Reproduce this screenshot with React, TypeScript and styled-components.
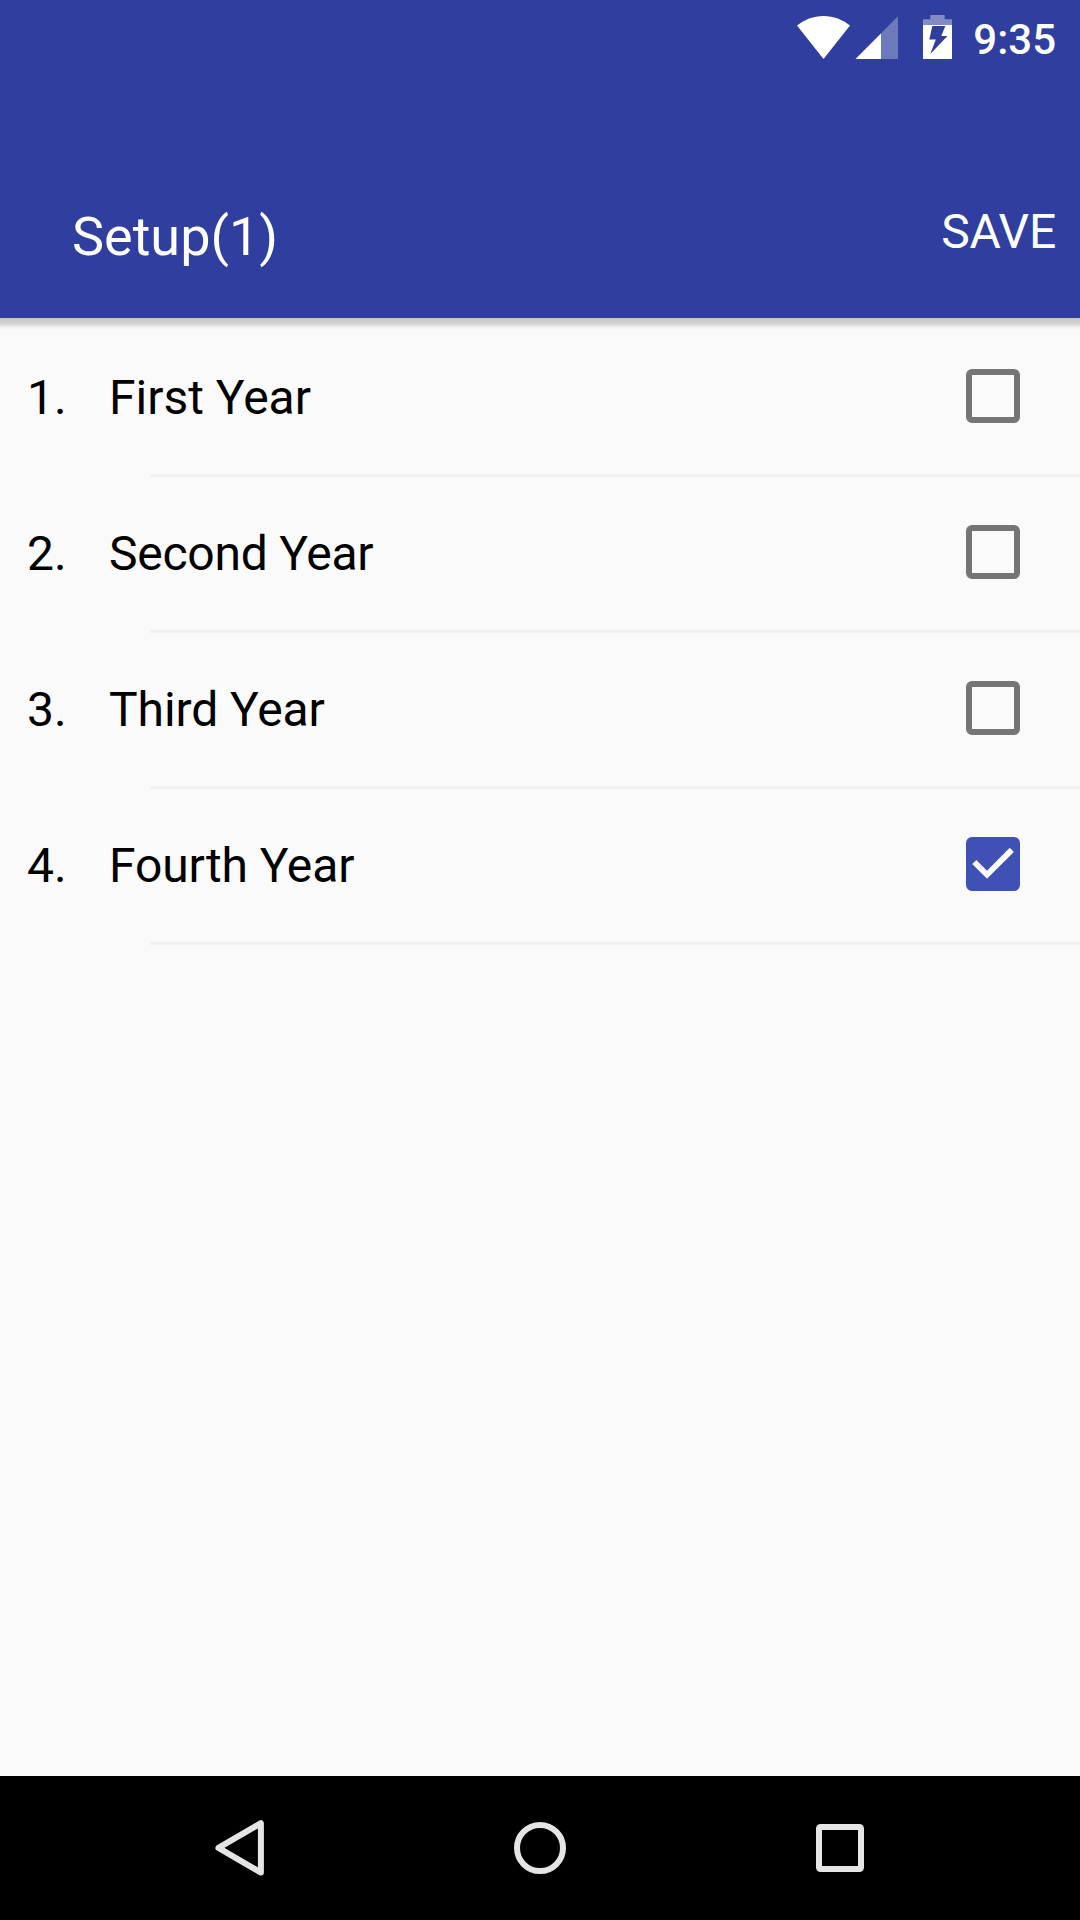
import React, { useState } from "react";
import styled, { createGlobalStyle } from "styled-components";

const GlobalStyle = createGlobalStyle`
  *, *::before, *::after { box-sizing: border-box; }
  body { margin: 0; background: #fafafa; }
`;

const Screen = styled.div`
  display: flex;
  flex-direction: column;
  width: 1080px;
  height: 1920px;
  overflow: hidden;
  background: #fafafa;
  color: #000;
  font-family: Roboto, sans-serif;
  font-size: 48px;
  line-height: 56px;
`;

const Header = styled.header`
  display: flex;
  flex-direction: column;
  flex: none;
  height: 318px;
  background: #303f9f;
  color: #fff;
`;

const StatusBar = styled.div`
  display: flex;
  align-items: flex-start;
  justify-content: flex-end;
  height: 72px;
  padding-right: 24px;
`;

const StatusIcons = styled.svg`
  display: block;
  width: 160px;
  height: 72px;
  margin-right: 18px;
`;

const Clock = styled.time`
  padding-top: 15px;
  font-size: 42px;
  font-weight: 500;
  line-height: 50px;
`;

const Toolbar = styled.div`
  display: flex;
  align-items: flex-start;
  justify-content: space-between;
  height: 246px;
  padding: 132px 24px 0 72px;
`;

const Title = styled.h1`
  margin: 1px 0 0;
  font-size: 54px;
  font-weight: 400;
  line-height: 64px;
`;

const SaveButton = styled.button`
  margin: 0;
  padding: 0;
  border: 0;
  background: none;
  color: inherit;
  font: inherit;
  letter-spacing: -0.2px;
`;

const Content = styled.main`
  flex: 1;
`;

const HeaderShadow = styled.div`
  height: 12px;
  margin-bottom: -9px;
  background: linear-gradient(#c4c4c4, #d4d4d4 45%, #f4f4f4 85%, #fafafa);
`;

const List = styled.ol`
  margin: 0;
  padding: 0;
  list-style: none;
`;

const Item = styled.li`
  display: flex;
  flex-direction: column;
  height: 156px;
`;

const Row = styled.label`
  display: flex;
  align-items: center;
  height: 153px;
  padding: 0 60px 0 27px;
`;

const Index = styled.span`
  width: 82px;
`;

const Label = styled.span<{ $tracking: number }>`
  flex: 1;
  letter-spacing: ${(p) => p.$tracking}px;
`;

const Divider = styled.div`
  height: 3px;
  margin-left: 150px;
  background: #f2f2f2;
`;

const Checkbox = styled.button<{ $checked: boolean }>`
  display: block;
  width: 54px;
  height: 54px;
  margin: 0 0 3px;
  padding: 0;
  border: ${(p) => (p.$checked ? "0" : "6px solid #757575")};
  border-radius: 6px;
  background: ${(p) => (p.$checked ? "#3f51b5" : "transparent")};
`;

const CheckMark = styled.svg`
  display: block;
  width: 54px;
  height: 54px;
`;

const NavBar = styled.nav`
  display: flex;
  align-items: center;
  justify-content: center;
  gap: 156px;
  flex: none;
  height: 144px;
  background: #000;
`;

const NavButton = styled.button`
  width: 144px;
  height: 144px;
  margin: 0;
  padding: 0;
  border: 0;
  background: none;
`;

const NavIcon = styled.svg`
  display: block;
  width: 144px;
  height: 144px;
  fill: none;
  stroke: #e5e5e5;
  stroke-width: 6;
  stroke-linejoin: round;
`;

const years = [
  { name: "First Year", tracking: 0 },
  { name: "Second Year", tracking: -0.25 },
  { name: "Third Year", tracking: -0.1 },
  { name: "Fourth Year", tracking: -0.1 },
];

export default function App() {
  const [selected, setSelected] = useState(3);

  return (
    <Screen>
      <GlobalStyle />
      <Header>
        <StatusBar>
          <StatusIcons viewBox="795 0 160 72" fill="#fff">
            <path d="M823.5 59 797 25.6C804.5 19.5 813.5 16 823.5 16S842.5 19.5 850 25.6Z" />
            <path d="M855.5 59 898 16.3V59Z" opacity="0.3" />
            <path d="M855.5 59 881 33.4V59Z" />
            <path d="M930.3 15H944.7V19.3H952V25H923V19.3H930.3Z" opacity="0.4" />
            <path
              fillRule="evenodd"
              d="M923 25H952V59H923ZM932.3 26 929.3 39.5H935.8L930.3 54 947.5 36H941.3L945.3 26Z"
            />
          </StatusIcons>
          <Clock>9:35</Clock>
        </StatusBar>
        <Toolbar>
          <Title>Setup(1)</Title>
          <SaveButton>SAVE</SaveButton>
        </Toolbar>
      </Header>
      <Content>
        <HeaderShadow />
        <List>
          {years.map(({ name, tracking }, i) => (
            <Item key={name}>
              <Row>
                <Index>{i + 1}.</Index>
                <Label $tracking={tracking}>{name}</Label>
                <Checkbox
                  role="checkbox"
                  aria-label={name}
                  aria-checked={selected === i}
                  $checked={selected === i}
                  onClick={() => setSelected(i)}
                >
                  {selected === i && (
                    <CheckMark viewBox="0 0 54 54">
                      <path d="M8.3 25 21 37.7 45.8 12.9" fill="none" stroke="#fafafa" strokeWidth="5.8" />
                    </CheckMark>
                  )}
                </Checkbox>
              </Row>
              <Divider />
            </Item>
          ))}
        </List>
      </Content>
      <NavBar>
        <NavButton aria-label="Back">
          <NavIcon viewBox="168 1776 144 144">
            <path d="M260.9 1823.2V1872.6L218.4 1847.9Z" />
          </NavIcon>
        </NavButton>
        <NavButton aria-label="Home">
          <NavIcon viewBox="0 0 144 144">
            <circle cx="72" cy="72" r="23" />
          </NavIcon>
        </NavButton>
        <NavButton aria-label="Recents">
          <NavIcon viewBox="0 0 144 144">
            <rect x="51" y="51" width="42" height="42" rx="1.5" />
          </NavIcon>
        </NavButton>
      </NavBar>
    </Screen>
  );
}
